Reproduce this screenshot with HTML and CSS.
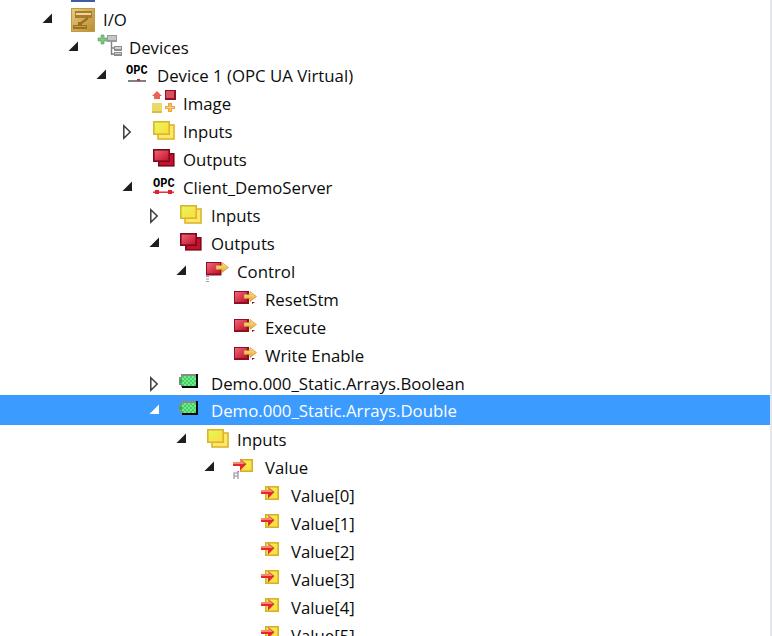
FILE: index.html
```html
<!DOCTYPE html>
<html lang="en">
<head>
<meta charset="utf-8">
<title>I/O tree</title>
<link rel="stylesheet" href="styles.css">
</head>
<body>
<svg class="defs" aria-hidden="true">
  <defs>
    <linearGradient id="gGold" x1="0" y1="0" x2="1" y2="1"><stop offset="0" stop-color="#e6cb86"/><stop offset="1" stop-color="#b88d33"/></linearGradient>
    <linearGradient id="gYellow" x1="0" y1="0" x2="1" y2="1"><stop offset="0" stop-color="#e4fb58"/><stop offset="1" stop-color="#ffd93f"/></linearGradient>
    <linearGradient id="gRed" x1="0" y1="0" x2="1" y2="1"><stop offset="0" stop-color="#f0687a"/><stop offset="1" stop-color="#c00f2a"/></linearGradient>
    <linearGradient id="gArrow" x1="0" y1="0" x2="0" y2="1"><stop offset="0" stop-color="#ffe08a"/><stop offset="1" stop-color="#e8a93a"/></linearGradient>
    <pattern id="pCheck" width="4" height="4" patternUnits="userSpaceOnUse"><rect width="4" height="4" fill="#6cec88"/><rect width="2" height="2" fill="#46cf66"/><rect x="2" y="2" width="2" height="2" fill="#46cf66"/></pattern>
    <symbol id="i-io" viewBox="0 0 24 24">
      <rect x="0" y="0" width="24" height="24" fill="#c49a3e"/>
      <rect x="1" y="1" width="22" height="22" fill="url(#gGold)"/>
      <rect x="4" y="3" width="17" height="7" fill="#ab7c28"/>
      <rect x="5" y="5" width="15" height="2" fill="#ecd69e"/>
      <path d="M17 10 L9 16" stroke="#9c6e1e" stroke-width="2.2" fill="none"/>
      <rect x="7" y="14" width="4" height="3" fill="#9c6e1e"/>
      <rect x="2" y="17" width="14" height="4" fill="#9c6e1e"/>
      <rect x="3" y="18" width="12" height="1" fill="#c99f4c"/>
    </symbol>
    <symbol id="i-devices" viewBox="0 0 24 24">
      <g transform="translate(1 0)">
        <path d="M3 -1h3v3h3v3h-3v3h-3v-3h-3v-3h3z" fill="#7cc77f" stroke="#559f5b" stroke-width=".6"/>
        <rect x="9" y="-1" width="10" height="7" fill="#9a9a9a"/>
        <rect x="10" y="0" width="8" height="4" fill="#c6c6c6"/>
        <path d="M13.5 6v13M13.5 12h3M13.5 18h3" stroke="#808080" stroke-width="1.4" fill="none"/>
        <rect x="16" y="10" width="8" height="5" fill="#8c8c8c"/>
        <rect x="17" y="11" width="6" height="2" fill="#d2d2d2"/>
        <rect x="16" y="16" width="8" height="4" fill="#8c8c8c"/>
        <rect x="17" y="17" width="6" height="1" fill="#d2d2d2"/>
      </g>
    </symbol>
    <symbol id="i-opc" viewBox="0 0 24 24">
      <text class="opc-text" x="1" y="10">OPC</text>
      <rect x="3" y="16" width="18" height="2" fill="#808080"/>
      <rect x="12" y="15" width="3" height="2" fill="#e0202c"/>
    </symbol>
    <symbol id="i-client" viewBox="0 0 24 24">
      <text class="opc-text" x="2" y="11">OPC</text>
      <rect x="2" y="15.5" width="21" height="1.4" fill="#e0202c"/>
      <rect x="4" y="14" width="4" height="4" fill="#e0202c"/>
      <rect x="17" y="14" width="4" height="4" fill="#e0202c"/>
    </symbol>
    <symbol id="i-image" viewBox="0 0 24 24">
      <path d="M6 -1 L11 4 H9 V7 H3 V4 H1 Z" fill="#f2604e"/>
      <rect x="14" y="-2" width="11" height="10" fill="#8e1226"/>
      <rect x="15" y="-1" width="8" height="7" fill="#d8505f"/>
      <rect x="1" y="11" width="10" height="10" fill="#d9c13c"/>
      <rect x="1" y="11" width="10" height="8" fill="#ead968"/>
      <path d="M17 11h4v3h3v3h-3v3h-4v-3h-3v-3h3z" fill="#eda63c"/>
      <path d="M19 12v7M15 15.5h8" stroke="#f8d68a" stroke-width="1"/>
    </symbol>
    <symbol id="i-inputs" viewBox="0 0 24 24">
      <rect x="7" y="5" width="16" height="14" fill="#fde868" stroke="#dcb42e" stroke-width="1.6"/>
      <rect x="2.8" y="1.8" width="15.4" height="12.4" fill="url(#gYellow)" stroke="#dcb42e" stroke-width="1.6"/>
    </symbol>
    <symbol id="i-outputs" viewBox="0 0 24 24">
      <rect x="7.8" y="5.8" width="15" height="12" fill="#c8102e" stroke="#7c0a1c" stroke-width="1.6"/>
      <rect x="2.8" y="1.8" width="15.4" height="11.4" fill="url(#gRed)" stroke="#7c0a1c" stroke-width="1.6"/>
    </symbol>
    <symbol id="i-out" viewBox="0 0 24 24">
      <rect x="1" y="3" width="15" height="13" fill="#8e0f20"/>
      <rect x="2" y="4" width="12" height="10" fill="url(#gRed)"/>
      <path d="M11 6.5h6v-3l6.5 5 -6.5 5v-3h-6z" fill="url(#gArrow)" stroke="#c88a20" stroke-width=".6"/>
      <path d="M19 14l3 0 -3 2z" fill="#7c0a1c"/>
    </symbol>
    <symbol id="i-outgroup" viewBox="0 0 24 24">
      <rect x="1" y="2" width="15.5" height="13.5" fill="#8e0f20"/>
      <rect x="2" y="3" width="13" height="10.5" fill="url(#gRed)"/>
      <path d="M11 5.5h6v-3l6.5 5 -6.5 5v-3h-6z" fill="url(#gArrow)" stroke="#c88a20" stroke-width=".6"/>
      <path d="M1 16h3v1h-3zM1 18.5h3v1h-3zM1 21h3v1h-3z" fill="#9a9a9a"/>
    </symbol>
    <symbol id="i-in" viewBox="0 0 24 24">
      <rect x="6.8" y="2.8" width="12.4" height="12.4" fill="url(#gYellow)" stroke="#d9b02c" stroke-width="1.6"/>
      <path d="M2 6h7v-3l6.5 5 -6.5 6.5 0-4.5h-7z" fill="#e8262e"/>
      <path d="M2 6h7v-3l5 5h-12z" fill="#f58a6a"/>
    </symbol>
    <symbol id="i-ingroup" viewBox="0 0 24 24">
      <rect x="7.8" y="3.8" width="11.4" height="11.4" fill="url(#gYellow)" stroke="#d9b02c" stroke-width="1.6"/>
      <path d="M0 6h7v-3l6.5 5 -6.5 6.5 0-4.5h-7z" fill="#e8262e"/>
      <path d="M0 6h7v-3l5 5h-12z" fill="#f58a6a"/>
      <path d="M1 23v-6h4v6M1 20h4" stroke="#8c8c8c" stroke-width="1.1" fill="none"/>
      <rect x="4.5" y="15" width="1.5" height="1.5" fill="#f030b0"/>
    </symbol>
    <symbol id="i-tag" viewBox="0 0 24 24">
      <path d="M3 3h15v12h-15v-3h-2v-6h2z" fill="url(#pCheck)"/>
      <path d="M3 2h15v2h-14v2h-3v-1h2z" fill="#8a8a8a"/>
      <path d="M1 6h1.5v6h2v3h-1.5v-2h-2z" fill="#8a8a8a"/>
      <rect x="1.5" y="7" width="2.5" height="4" fill="#2fb24e"/>
      <path d="M18 2h2v14h-16v-2h14z" fill="#0a0a0a"/>
    </symbol>
    <symbol id="t-open" viewBox="0 0 16 16">
      <path d="M2.5 11 L12 11 L12 1.5 Z" fill="currentColor"/>
    </symbol>
    <symbol id="t-closed" viewBox="0 0 16 16">
      <path d="M3.8 1.8 L10.2 8 L3.8 14.2 Z" fill="#fff" stroke="#3c3c3c" stroke-width="1.5"/>
    </symbol>
  </defs>
</svg>
<main class="pane">
  <div class="tree">
    <div class="clipped-row"></div>
    <ul class="rows">
      <li class="row d0"><svg class="tog"><use href="#t-open"/></svg><svg class="ico"><use href="#i-io"/></svg><span>I/O</span></li>
      <li class="row d1"><svg class="tog"><use href="#t-open"/></svg><svg class="ico"><use href="#i-devices"/></svg><span>Devices</span></li>
      <li class="row d2"><svg class="tog"><use href="#t-open"/></svg><svg class="ico"><use href="#i-opc"/></svg><span>Device 1 (OPC UA Virtual)</span></li>
      <li class="row d3"><i class="tog"></i><svg class="ico"><use href="#i-image"/></svg><span>Image</span></li>
      <li class="row d3"><svg class="tog"><use href="#t-closed"/></svg><svg class="ico"><use href="#i-inputs"/></svg><span>Inputs</span></li>
      <li class="row d3"><i class="tog"></i><svg class="ico"><use href="#i-outputs"/></svg><span>Outputs</span></li>
      <li class="row d3"><svg class="tog"><use href="#t-open"/></svg><svg class="ico"><use href="#i-client"/></svg><span>Client_DemoServer</span></li>
      <li class="row d4"><svg class="tog"><use href="#t-closed"/></svg><svg class="ico"><use href="#i-inputs"/></svg><span>Inputs</span></li>
      <li class="row d4"><svg class="tog"><use href="#t-open"/></svg><svg class="ico"><use href="#i-outputs"/></svg><span>Outputs</span></li>
      <li class="row d5"><svg class="tog"><use href="#t-open"/></svg><svg class="ico"><use href="#i-outgroup"/></svg><span>Control</span></li>
      <li class="row d6"><i class="tog"></i><svg class="ico"><use href="#i-out"/></svg><span>ResetStm</span></li>
      <li class="row d6"><i class="tog"></i><svg class="ico"><use href="#i-out"/></svg><span>Execute</span></li>
      <li class="row d6"><i class="tog"></i><svg class="ico"><use href="#i-out"/></svg><span>Write Enable</span></li>
      <li class="row d4"><svg class="tog"><use href="#t-closed"/></svg><svg class="ico"><use href="#i-tag"/></svg><span>Demo.000_Static.Arrays.Boolean</span></li>
      <li class="row d4 selected"><svg class="tog"><use href="#t-open"/></svg><svg class="ico"><use href="#i-tag"/></svg><span>Demo.000_Static.Arrays.Double</span></li>
      <li class="row d5"><svg class="tog"><use href="#t-open"/></svg><svg class="ico"><use href="#i-inputs"/></svg><span>Inputs</span></li>
      <li class="row d6"><svg class="tog"><use href="#t-open"/></svg><svg class="ico"><use href="#i-ingroup"/></svg><span>Value</span></li>
      <li class="row d7"><i class="tog"></i><svg class="ico"><use href="#i-in"/></svg><span>Value[0]</span></li>
      <li class="row d7"><i class="tog"></i><svg class="ico"><use href="#i-in"/></svg><span>Value[1]</span></li>
      <li class="row d7"><i class="tog"></i><svg class="ico"><use href="#i-in"/></svg><span>Value[2]</span></li>
      <li class="row d7"><i class="tog"></i><svg class="ico"><use href="#i-in"/></svg><span>Value[3]</span></li>
      <li class="row d7"><i class="tog"></i><svg class="ico"><use href="#i-in"/></svg><span>Value[4]</span></li>
      <li class="row d7"><i class="tog"></i><svg class="ico"><use href="#i-in"/></svg><span>Value[5]</span></li>
    </ul>
  </div>
  <div class="edge"></div>
</main>
</body>
</html>
```
FILE: styles.css
```css
* { box-sizing: border-box; }
html, body { margin: 0; padding: 0; height: 100%; background: #fff; overflow: hidden; }
body { font-family: "Open Sans", "Noto Sans", sans-serif; font-size: 16.8px; color: #0c0c0c; }
symbol { overflow: visible; }
.defs { display: block; width: 0; height: 0; }
.pane { display: flex; width: 772px; height: 636px; overflow: hidden; }
.tree { flex: 1; min-width: 0; overflow: hidden; }
.edge { width: 2px; background: #e6e6ee; }
.clipped-row { width: 24px; height: 2px; margin: 0 0 4px 71px; background: #3f5c9c; }
.rows { list-style: none; margin: 0; padding: 0; }
.row { display: flex; align-items: center; height: 28px; white-space: nowrap; }
.row span { margin: 0 0 2px 8px; }
.tog { display: block; flex: none; width: 16px; height: 16px; margin-right: 15px; overflow: visible; color: #1e1e1e; }
.ico { display: block; flex: none; width: 24px; height: 24px; overflow: visible; }
.d0 { padding-left: 40px; }
.d1 { padding-left: 66px; }
.d2 { padding-left: 94px; }
.d3 { padding-left: 120px; }
.d4 { padding-left: 147px; }
.d4 span { margin-left: 9px; }
.d5 { padding-left: 174px; }
.d6 { padding-left: 202px; }
.d7 { padding-left: 228px; }
.selected { height: 30px; margin: -3px 0 1px; padding-top: 3px; padding-bottom: 1px; background: #3b9bff; color: #fff; }
.selected .tog { color: #fff; }
.opc-text { font-family: "Liberation Mono", monospace; font-size: 12px; font-weight: 700; fill: #000; }
```
